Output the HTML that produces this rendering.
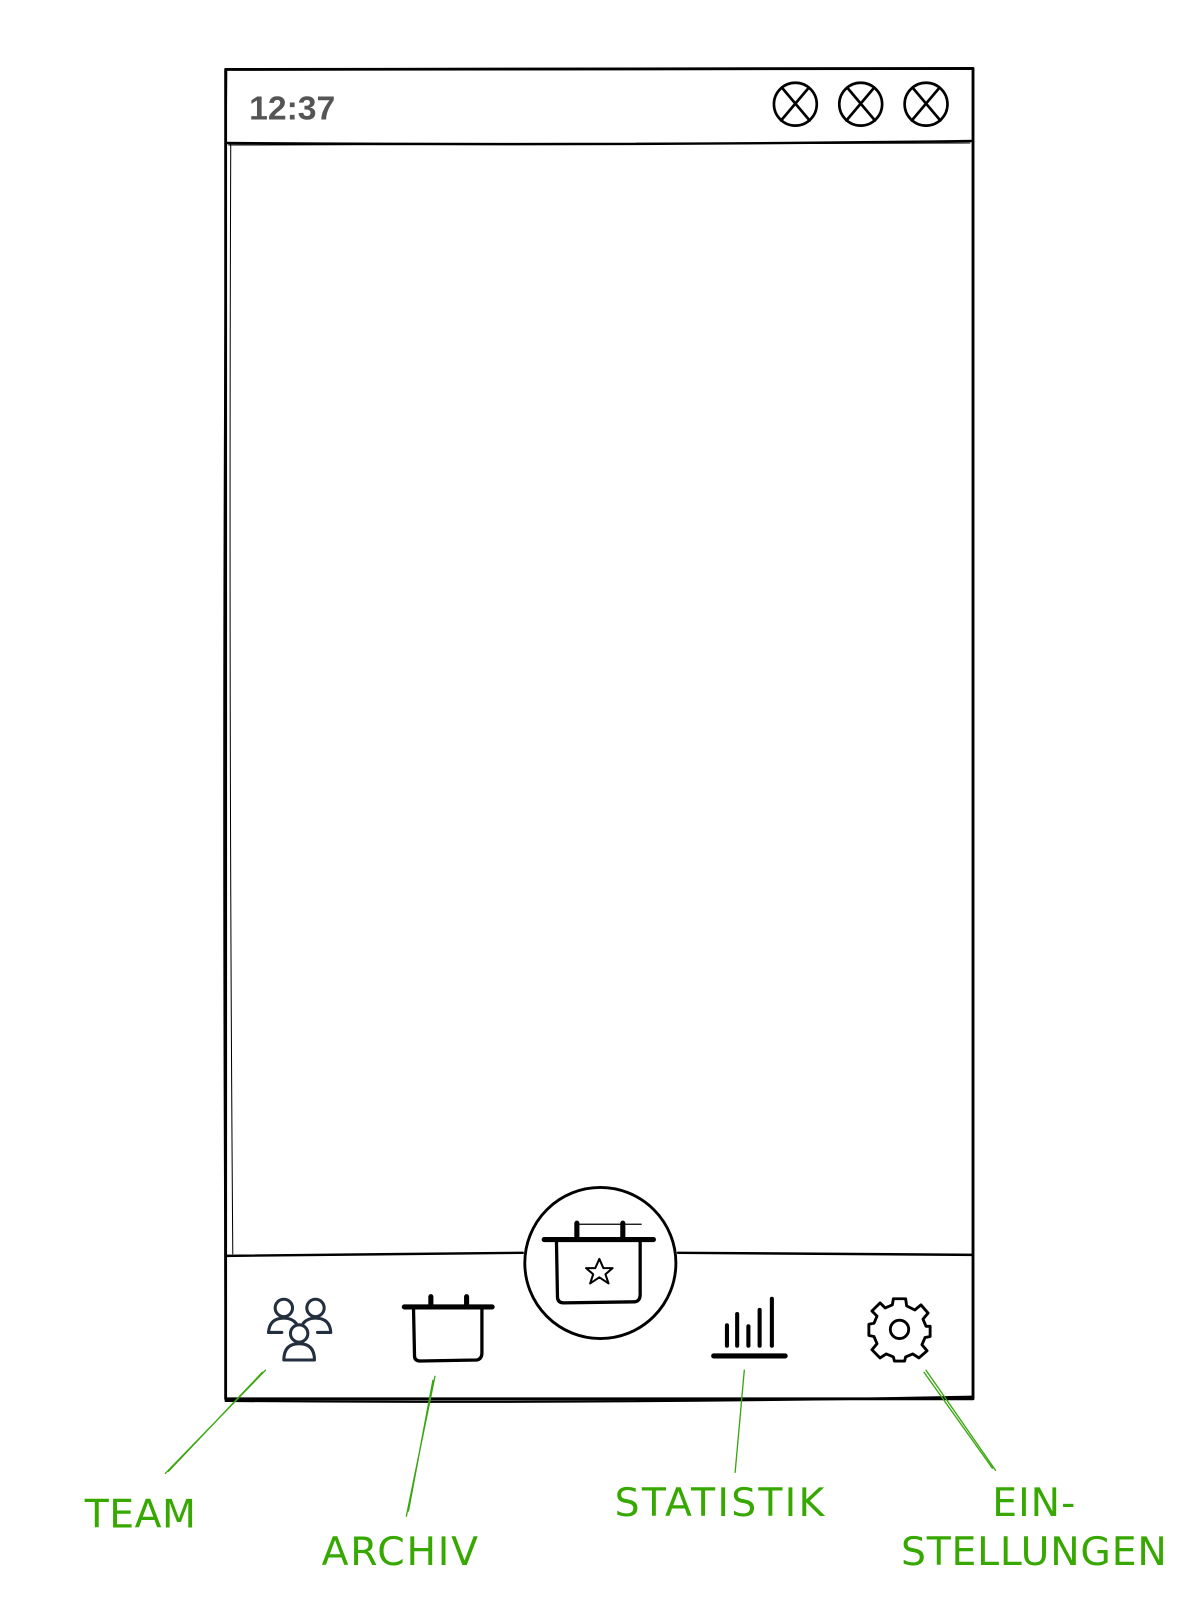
<!DOCTYPE html>
<html><head><meta charset="utf-8"><style>
html,body{margin:0;padding:0;background:#fff;width:1201px;height:1601px;overflow:hidden}
svg{display:block}
</style></head><body>
<svg width="1201" height="1601" viewBox="0 0 1176.3 1568" xmlns="http://www.w3.org/2000/svg">
<g fill="none" stroke="#000" stroke-linecap="round" stroke-linejoin="round">
  <path d="M221 68 L953 67 L953 1370 L221 1370 Z" stroke-width="2.8"/>
  <path d="M222 70 Q217 700 221 1368" stroke-width="1.2"/>
  <path d="M226 140 Q224 700 228 1228" stroke-width="1"/>
  <path d="M221 1372 Q600 1375 952 1368" stroke-width="2.2"/>
  <path d="M221 140 Q600 143 953 138" stroke-width="2.4"/>
  <path d="M224 142 Q600 140 950 140" stroke-width="1"/>
  <path d="M221 1230 L512 1227" stroke-width="2.4"/>
  <path d="M664 1227 L953 1229" stroke-width="2.4"/>
  <g stroke-width="2.6">
    <circle cx="779" cy="102" r="21"/><path d="M766 86 L793 118 M792 86 L765 118"/>
    <circle cx="843" cy="102" r="21"/><path d="M830 86 L857 118 M856 86 L829 118"/>
    <circle cx="907" cy="102" r="21"/><path d="M894 86 L921 118 M920 86 L893 118"/>
  </g>
  <ellipse cx="588" cy="1237" rx="74" ry="74" stroke-width="2.8"/>
  <path d="M533 1214 L640 1214" stroke-width="5"/>
  <path d="M545 1215 L546 1270 Q546 1276 552 1276 L622 1275 Q627 1274 627 1268 L627 1215" stroke-width="3.2"/>
  <path d="M565 1198 L565 1213 M610 1198 L610 1213" stroke-width="5"/>
  <path d="M565 1199 L628 1199" stroke-width="1.2"/>
  <path d="M587 1233 L591 1242 L600 1242 L593 1248 L596 1257 L587 1251 L578 1257 L581 1248 L574 1242 L583 1242 Z" stroke-width="2"/>
  <g stroke="#232f3e" stroke-width="3">
    <circle cx="278" cy="1281" r="8.5"/><path d="M263 1305 Q264 1291 278 1291 Q286 1291 290 1296"/>
    <path d="M263 1305 L276 1305"/>
    <circle cx="309" cy="1281" r="8.5"/><path d="M297 1296 Q301 1291 309 1291 Q323 1291 324 1305 L311 1305"/>
    <circle cx="293" cy="1306" r="8.5"/><path d="M278 1332 Q278 1316 293 1316 Q308 1316 308 1332 Z"/>
  </g>
  <path d="M396 1280 L482 1280" stroke-width="5"/>
  <path d="M405 1281 L406 1328 Q406 1333 412 1333 L467 1332 Q472 1331 472 1325 L472 1281" stroke-width="3.2"/>
  <path d="M422 1270 L422 1280 M457 1270 L457 1280" stroke-width="5"/>
  <path d="M699 1328 L769 1328" stroke-width="5"/>
  <path d="M712 1318 L712 1298 M722 1318 L722 1287 M733 1318 L733 1299 M744 1318 L744 1283 M756 1318 L756 1272" stroke-width="4"/>
  <path d="M875 1272 L887 1272 L888 1279 L896 1283 L902 1278 L909 1286 L904 1292 L907 1299 L911 1299 L911 1309 L906 1310 L903 1317 L908 1323 L900 1330 L894 1326 L887 1329 L886 1333 L876 1333 L875 1329 L868 1326 L862 1330 L854 1322 L859 1316 L856 1309 L851 1308 L851 1297 L856 1296 L859 1289 L854 1284 L862 1276 L867 1281 L874 1278 Z" stroke-width="2.8"/>
  <circle cx="881" cy="1302" r="9" stroke-width="2.8"/>
  <g stroke="#3aa60f" stroke-width="1.3">
    <path d="M260 1342 L162 1443 M257 1344 L165 1441"/>
    <path d="M426 1348 L398 1485 M424 1352 L400 1480"/>
    <path d="M729 1342 L720 1442"/>
    <path d="M907 1342 L975 1440 M905 1344 L972 1438"/>
  </g>
</g>
<text x="244" y="117" style="font-family:'Liberation Sans',sans-serif;font-weight:bold;font-size:33px" fill="#555">12:37</text>
<g fill="#36a800" style="font-family:'DejaVu Sans','Liberation Sans',sans-serif;font-size:38.5px">
  <text x="83" y="1496" style="letter-spacing:0.5px">TEAM</text>
  <text x="315" y="1533" style="letter-spacing:1.7px">ARCHIV</text>
  <text x="602" y="1485" style="letter-spacing:2.2px">STATISTIK</text>
  <text x="1013" y="1485" text-anchor="middle" style="letter-spacing:1px">EIN-</text>
  <text x="1013" y="1533" text-anchor="middle" style="letter-spacing:0.8px">STELLUNGEN</text>
</g>
</svg>
</body></html>
